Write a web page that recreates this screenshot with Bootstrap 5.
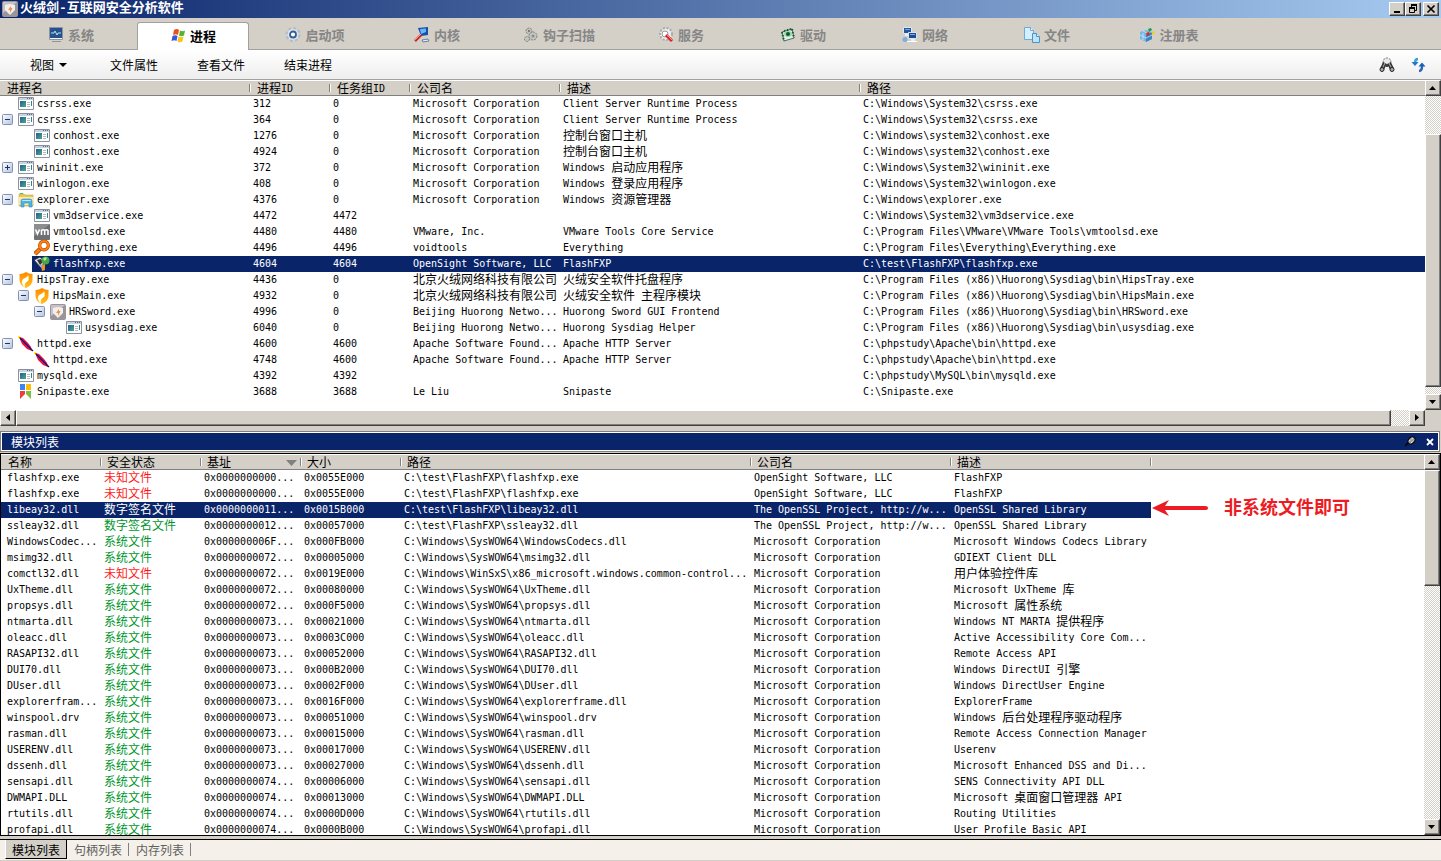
<!DOCTYPE html>
<html lang="zh-CN">
<head>
<meta charset="utf-8">
<meta name="viewport" content="width=device-width, initial-scale=1">
<title>火绒剑-互联网安全分析软件</title>
<link rel="stylesheet" href="https://cdn.jsdelivr.net/npm/bootstrap@5.3.0/dist/css/bootstrap.min.css">
<style>
:root { --face:#d4d0c8; --navy:#0a246a; --shade:#808080; --dark:#404040; }
body { background:var(--face); color:#000; font-family:"DejaVu Sans Mono","Noto Sans CJK SC",monospace; font-size:10px; line-height:16px; }
button { font-family:inherit; color:inherit; }
.han { font-family:"Noto Sans CJK SC",sans-serif; font-size:12px; line-height:12px; vertical-align:-1px; }
svg { flex:none; display:block; }

.title-bar { height:18px; padding:0 2px; gap:2px; background:linear-gradient(90deg,#0a246a,#a6caf0); color:#fff; }
.title-bar h1 { font-family:"Liberation Mono","Noto Sans CJK SC",monospace; font-size:13px; line-height:20px; font-weight:700; }
.raised { background:var(--face); border:1px solid; border-color:#fff var(--dark) var(--dark) #fff; border-radius:0; box-shadow:inset -1px -1px var(--shade); padding:0; display:flex; align-items:center; justify-content:center; flex:none; }
.win-btn { width:16px; height:14px; }
.win-btn:last-child { margin-left:2px; }

.main-tabs { height:32px; border-bottom:1px solid #a0a0a0; padding:4px 10px 0; flex-wrap:nowrap; }
.main-tabs .nav-item { width:122px; }
.main-tabs .nav-link { width:110px; height:26px; margin:0 6px; padding:0; border:0; border-radius:0; background:none; display:flex; align-items:center; justify-content:center; gap:4px; font-family:"Noto Sans CJK SC",sans-serif; font-size:13px; font-weight:700; color:#868686; }
.main-tabs .nav-link.active { width:112px; height:28px; padding-bottom:2px; margin:0 5px; background:#fff; color:#000; border:1px solid #a0a0a0; border-bottom:0; border-radius:3px 3px 0 0; }

.tool-bar { height:30px; padding:0 14px 0 22px; background:linear-gradient(#fff,#eee); border-bottom:1px solid #a0a0a0; }
.tool-bar .btn { border:0; border-radius:0; padding:0 8px; font:12px/28px "Noto Sans CJK SC",sans-serif; color:#000; }
.tool-group { gap:23px; }
.tool-group .btn:first-child { padding-right:11px; }

.list-grid { table-layout:fixed; width:100%; color:#000; --bs-table-bg:transparent; }
.list-grid th, .list-grid td { height:16px; padding:0 0 0 3px; border:0; color:inherit; white-space:nowrap; font-weight:400; vertical-align:top; line-height:16px; }
.list-grid th { background:var(--face); box-shadow:inset 0 1px #fff,inset 0 -1px var(--shade); padding:2px 0 1px 7px; line-height:13px; position:relative; }
.list-grid th + th::before { content:""; position:absolute; left:-1px; top:4px; height:8px; width:2px; border-left:1px solid var(--shade); border-right:1px solid #fff; }
.module-grid th + th { padding-left:6px; }
.list-grid td.spare { position:relative; }
.process-area { padding-bottom:10px; }
.process-grid td:first-child { padding:0; }
.module-grid td:first-child { padding-left:6px; }
.tree { display:flex; height:16px; }
.slot { width:16px; height:16px; padding:0; border:0; background:none; flex:none; }
.node { display:flex; gap:3px; padding-left:2px; flex:1; min-width:0; }
.lvl-1 { padding-left:16px; } .lvl-2 { padding-left:32px; } .lvl-3 { padding-left:48px; }
.list-grid td.risk { color:#ff1a1a; }
.list-grid td.safe { color:#00962d; }
.list-grid .picked td:not(:first-child):not(.spare), .module-grid .picked td:first-child, .picked .node { background:var(--navy); color:#fff; }

.track { background:repeating-conic-gradient(var(--face) 0 25%,#fff 0 50%) 0 0/2px 2px; }
.v-scroll { width:16px; flex:none; }
.v-scroll .raised { width:100%; }
.v-scroll button { height:16px; }
.h-scroll { height:16px; margin-right:16px; }
.h-scroll button { width:16px; height:16px; }
.f-38{flex:38} .f-254{flex:254} .f-7{flex:7} .f-1375{flex:1375} .f-18{flex:18} .f-115{flex:115} .f-235{flex:235}

.dock-title { height:21px; margin:5px 1px 1px 0; padding:1px; background:#fff; border:1px solid var(--shade); }
.dock-title > div { background:var(--navy); color:#fff; padding-left:9px; }
.dock-title h2, .pane-tabs .nav-link { font:12px/17px "Noto Sans CJK SC",sans-serif; }
.dock-title button { border:0; background:none; padding:0; width:16px; display:flex; align-items:center; justify-content:center; }
.module-pane { min-height:0; border:1px solid #000; }
.callout { position:absolute; left:0; top:-3px; height:18px; gap:16px; font:700 18px/14px "Noto Sans CJK SC",sans-serif; color:#ed1c24; }
.pane-foot { margin-top:3px; height:22px; background:#f5f1ea; border-top:1px solid #000; border-bottom:1px solid var(--face); padding-left:5px; }
.pane-tabs .nav-link { margin:0; border:0; border-radius:0; background:none; color:#606060; padding:0 7px; height:19px; line-height:19px; position:relative; }
.pane-tabs .nav-link:not(.active)::after { content:""; position:absolute; right:0; top:3px; height:13px; border-right:1px solid var(--shade); }
.pane-tabs .nav-link.active { padding:0 6px; background:var(--face); color:#000; border-right:1px solid #000; border-bottom:1px solid #000; border-left:1px solid #fff; }
</style>
</head>
<body class="vh-100 d-flex flex-column overflow-hidden">

<svg width="0" height="0" class="position-absolute" aria-hidden="true">
  <defs>
    <linearGradient id="gBlue" x2="1" y2="1"><stop stop-color="#2f56a0"/><stop offset="1" stop-color="#3fae7a"/></linearGradient>
    <linearGradient id="gBox" x2="1" y2="1"><stop stop-color="#fff"/><stop offset="1" stop-color="#b4c3de"/></linearGradient>
    <linearGradient id="gFire" y2="1" x2="0"><stop stop-color="#ff8a00"/><stop offset="1" stop-color="#ffc21a"/></linearGradient>
    <symbol id="app" viewBox="0 0 16 16"><path fill="#fff" stroke="#8c929c" d="M.5 1.500h15v12H.5z"/><path fill="#c9d3df" d="M1 2h14v2H1z"/><path fill="#52698c" d="M9 2h1v1H9zm2 0h1v1h-1zm2 0h1v1h-1z"/><path fill="url(#gBlue)" d="M2 5h6v6H2z"/><path stroke="#b5bac0" d="M9 6.500h3M9 8.500h3M9 10.500h3"/><path fill="#3a7f92" d="M13 5h1v5h-1z"/></symbol>
    <symbol id="folder" viewBox="0 0 16 16"><path fill="#e7c65c" stroke="#c9a440" stroke-width=".6" d="M1 2h5l1 1h8v11H1z"/><path fill="#fbeda6" d="M1 5h14v8H1z"/><path fill="#4bc24b" d="M2 1h3v1H2z"/><path fill="#4fb4e6" stroke="#2b8bc4" stroke-width=".6" d="M3 15V9q0-2 2-2h7q2 0 2 2v6h-3v-4H6v4z"/><path fill="#bfe6fa" d="M4 9q0-1 1-1h7q1 0 1 1z"/></symbol>
    <symbol id="vm" viewBox="0 0 16 16"><rect width="16" height="16" rx="1" fill="#6f7072"/><path fill="#8d8e90" d="M0 0h16L0 12z"/><path fill="none" stroke="#fff" stroke-width="1.600" d="M1.500 5.500 3.500 10l2-4.500M7.500 11V6.500q2-1.500 3.200 0V11m0-4.500q2-1.500 3.300 0V11"/></symbol>
    <symbol id="lens" viewBox="0 0 16 16"><path stroke="#a84300" stroke-width="4.500" d="m6 9-5 5"/><path stroke="#ff7f0f" stroke-width="3" d="m6 9-5 5"/><circle cx="10" cy="5.500" r="4.300" fill="#fff" stroke="#a84300" stroke-width="3.200"/><circle cx="10" cy="5.500" r="4.300" fill="none" stroke="#ff7f0f" stroke-width="2.200"/></symbol>
    <symbol id="fxp" viewBox="0 0 16 16"><path fill="#d9dde2" stroke="#20242c" stroke-width=".8" d="M0 4 6 1l5 4-4 7z"/><path fill="#333" d="m3 4 4-1 2 3-3 3z"/><circle cx="11.500" cy="4.500" r="4" fill="#45a845"/><path fill="#b6e8a0" d="M9 3q2-3 4-1l-2 3z"/><path fill="#f09021" d="m7 9 4-1v6l-3 1z"/><path fill="#7aa8d8" d="M6 9h2v4z"/></symbol>
    <symbol id="shield" viewBox="0 0 16 16"><path fill="url(#gFire)" d="M8 0q3 2 6.500 2v6q0 5-6.500 8-6.500-3-6.500-8V2Q5 2 8 0z"/><path fill="#fff" d="M10 3q2 5-1 7-2 2-2 5-3-1-3-5 0-3 3-4 3-1 3-3z"/><path fill="#ffb000" d="m10 9-3 6q-1-4 3-6z"/></symbol>
    <symbol id="sword" viewBox="0 0 16 16"><rect width="16" height="16" rx="2" fill="#99959b"/><path fill="#c6c2c8" d="M1 1h14L1 12z"/><path fill="#f3efed" d="m8 3 5 1v5l-5 5-5-5V4z"/><path fill="#e9924f" d="m9 5-3 4h2v3l2.500-5H9z"/></symbol>
    <symbol id="feather" viewBox="0 0 16 16"><path fill="#ff0" d="M0 0h2v2H0z"/><path fill="#f01030" d="m1 1 4 1 5 5 3 4 1 4-5-2-5-5z"/><path stroke="#c413c9" stroke-width="2" d="m3 3 9 9"/><path stroke="#14145a" stroke-width="1.200" d="m2 2 13 13"/></symbol>
    <symbol id="snip" viewBox="0 0 16 16"><path fill="#3f82f4" d="M2 0h5v6H2z"/><path fill="#fbbe08" d="M8 0h5v6H8z"/><path fill="#e84237" d="M2 7h5v3l-5 5z"/><path fill="#7bc043" d="M8 7h5v8l-5-5z"/></symbol>
    <symbol id="minus" viewBox="0 0 16 16"><rect x="2.500" y="2.500" width="10" height="10" rx="1" fill="url(#gBox)" stroke="#7b93b9"/><path stroke="#1a3666" d="M5 7.500h5"/></symbol>
    <symbol id="plus" viewBox="0 0 16 16"><use href="#minus"/><path stroke="#1a3666" d="M7.500 5v5"/></symbol>
  </defs>
</svg>

<header class="title-bar d-flex align-items-center flex-shrink-0">
  <svg width="16" height="16"><use href="#sword"/></svg>
  <h1 class="m-0 me-auto">火绒剑-互联网安全分析软件</h1>
  <div class="d-flex">
    <button class="raised win-btn" aria-label="最小化"><svg width="10" height="10"><path d="M2 7h6v2H2z"/></svg></button>
    <button class="raised win-btn" aria-label="还原"><svg width="10" height="10"><path d="M3 0h6v2H3zM1 3h6v2H1z"/><path fill="none" stroke="#000" d="M3.500 3V1M7 6.500h1.500V1M1.500 4v4.500h5V4"/></svg></button>
    <button class="raised win-btn" aria-label="关闭"><svg width="10" height="10"><path stroke="#000" stroke-width="1.700" d="m1.500 1.500 7 7m0-7-7 7"/></svg></button>
  </div>
</header>

<ul class="nav main-tabs flex-shrink-0">
  <li class="nav-item"><button class="nav-link"><svg width="16" height="16"><path fill="#f4f4f4" stroke="#8b95a2" d="M1.500.5h13v12h-13zM4 14.500h9"/><path fill="#28508e" d="M2 1h12v10H2z"/><path fill="none" stroke="#a8e7ee" d="M3 6h3l1-2 2 4 1-2h3"/></svg>系统</button></li>
  <li class="nav-item"><button class="nav-link active"><svg width="16" height="16"><path fill="#e9501c" d="M4 2q3-2 5 0L8 7Q6 5.500 3 7z"/><path fill="#55b42c" d="M10 2.500q3 1.500 5 0L14 7.500q-3 1.500-5 0z"/><path fill="#3159dc" d="M2.500 8q3-1.500 5 0l-1 5q-2-1.500-5 0z"/><path fill="#fcc314" d="M8.500 8.500q3 1.500 5 0l-1 5q-3 1.500-5 0z"/></svg>进程</button></li>
  <li class="nav-item"><button class="nav-link"><svg width="16" height="16"><circle cx="8" cy="7.500" r="6.500" fill="#d5dae0" stroke="#b4bbc4" stroke-width="2" stroke-dasharray="3 2"/><circle cx="8" cy="7.500" r="5" fill="#e2e6ea"/><circle cx="8" cy="7.500" r="3" fill="#fff" stroke="#315f9e" stroke-width="1.800"/></svg>启动项</button></li>
  <li class="nav-item"><button class="nav-link"><svg width="16" height="16"><path fill="#e8edf5" stroke="#6b7ea0" d="m8 13 6-1 1 2-6 1z"/><path fill="#164eae" d="m4 1 10-1v8l-7 1z"/><path fill="#69b6f1" d="m6 2 6-.5V5L7 7z"/><path stroke="#c82820" stroke-width="2.500" d="m7 8-6 6"/><path stroke="#f29b8e" d="m7 7-6 6"/></svg>内核</button></li>
  <li class="nav-item"><button class="nav-link"><svg width="16" height="16"><g fill="#c3c4bf" stroke="#7e827c" stroke-dasharray="2 1"><circle cx="6" cy="4" r="3"/><circle cx="10" cy="9" r="4"/><circle cx="4" cy="12" r="2.500"/></g><circle cx="10" cy="9" r="1.500" fill="#8c8f89"/><circle cx="6" cy="4" r="1" fill="#666"/></svg>钩子扫描</button></li>
  <li class="nav-item"><button class="nav-link"><svg width="16" height="16"><circle cx="8" cy="7" r="6" fill="#eee" stroke="#aaa" stroke-width="2" stroke-dasharray="2 1.500"/><circle cx="7" cy="7" r="3" fill="#fff" stroke="#999"/><path stroke="#d8202a" stroke-width="3" d="m8 8 6 6"/><path stroke="#ff8d8d" d="m8 7 6 6"/></svg>服务</button></li>
  <li class="nav-item"><button class="nav-link"><svg width="16" height="16"><path fill="#e6eeea" stroke="#42765a" d="m2 5 10-3 2 9-10 3z"/><path stroke="#18563a" stroke-width="2" stroke-dasharray="1.500 1.500" d="M2 5l2 9M12 2l2 9M4 4l7-2"/><ellipse cx="8" cy="7" rx="4" ry="3" fill="#9fd4b0"/><circle cx="8" cy="7" r="2" fill="#0b5a2c"/></svg>驱动</button></li>
  <li class="nav-item"><button class="nav-link"><svg width="16" height="16"><path fill="#23579b" stroke="#e4e8ee" d="M1.500.5h8v6h-8z"/><path fill="#eee" d="M3 7h4v2H3zm6 5h4v2H9z"/><path fill="#1b4d96" stroke="#dde2e8" d="M6.500 5.500h8v6h-8z"/><path fill="#75a8e4" d="M8 7h5v1H8zM3 2h5v1H3z"/><circle cx="3" cy="12.500" r="2.500" fill="#7daede"/><path stroke="#fff" d="M5 14.500h10"/></svg>网络</button></li>
  <li class="nav-item"><button class="nav-link"><svg width="16" height="16"><path fill="#d6efff" stroke="#6cacd7" d="M.5.5h6l3 3v9h-9z"/><path fill="#fff" stroke="#6cacd7" d="M6.500.5v3h3"/><path fill="#bfe3fb" stroke="#4c94c4" d="M8.500 6.500h4l3 3v6h-7z"/><path fill="#fff" stroke="#4c94c4" d="M12.500 6.500v3h3"/></svg>文件</button></li>
  <li class="nav-item"><button class="nav-link"><svg width="16" height="16"><path fill="#79b8e4" d="m1 5 6-2 6 2v7l-6 3-6-3z"/><path fill="#3a86c0" d="m7 8 6-3v7l-6 3z"/><path fill="none" stroke="#d6efff" stroke-width=".7" d="m1 8 6 3 6-3M4 4l6 3M4 6v7"/><path fill="#1b9e58" d="m9 2 3-1 1 2-3 2z"/><path fill="#d62c2c" d="m7 6 3-1 1 3-3 1z"/><path fill="#f2cf1a" d="m12 5 3-1 1 2-2 2z"/></svg>注册表</button></li>
</ul>

<div class="tool-bar d-flex align-items-center flex-shrink-0">
  <div class="tool-group d-flex me-auto">
    <button class="btn d-flex align-items-center gap-1" aria-haspopup="true">视图<svg width="10" height="10"><path d="M1 3h8L5 7z"/></svg></button>
    <button class="btn">文件属性</button>
    <button class="btn">查看文件</button>
    <button class="btn">结束进程</button>
  </div>
  <div class="d-flex gap-3">
    <button class="btn p-0" aria-label="查找"><svg width="16" height="16"><path fill="#e9e9e9" stroke="#777" stroke-dasharray="2 1" d="M4 6q0-5 4-5t4 5v3H4z"/><path stroke="#333" stroke-width="4" d="m6 6-3 6m7-6 3 6"/><path stroke="#bbb" d="m6 6-3 6m7-6 3 6"/><circle cx="3" cy="12.500" r="2" fill="#aaa" stroke="#222"/><circle cx="13" cy="12.500" r="2" fill="#aaa" stroke="#222"/><path fill="#444" d="M7 7h2v3H7z"/></svg></button>
    <button class="btn p-0" aria-label="刷新"><svg width="16" height="16"><path fill="none" stroke="#3ba0dd" stroke-width="2.500" d="M7 2Q4 2 4 6"/><path fill="#1f78c2" d="M.5 5h7L4 9z"/><path fill="none" stroke="#2768b8" stroke-width="2.500" d="M8 14q3 0 3-5"/><path fill="#1b5db0" d="M7.500 9.500h7L11 5.500z"/></svg></button>
  </div>
</div>

<section class="d-flex bg-white flex-shrink-0">
  <div class="process-area flex-fill overflow-hidden">
    <table class="table mb-0 list-grid process-grid">
      <colgroup><col width="250"><col width="80"><col width="80"><col width="150"><col width="300"><col></colgroup>
      <thead><tr><th>进程名</th><th>进程ID</th><th>任务组ID</th><th>公司名</th><th>描述</th><th>路径</th></tr></thead>
      <tbody id="processes"></tbody>
    </table>
  </div>
  <div class="v-scroll d-flex flex-column track">
    <button class="raised" aria-label="向上"><svg width="8" height="8"><path d="M0 6h7L3.500 2z"/></svg></button>
    <div class="f-38"></div><div class="raised f-254"></div><div class="f-7"></div>
    <button class="raised" aria-label="向下"><svg width="8" height="8"><path d="M0 2h7L3.500 6z"/></svg></button>
  </div>
</section>
<div class="h-scroll d-flex track flex-shrink-0">
  <button class="raised" aria-label="向左"><svg width="8" height="8"><path d="M6 0v7L2 3.500z"/></svg></button>
  <div class="raised f-1375"></div><div class="f-18"></div>
  <button class="raised" aria-label="向右"><svg width="8" height="8"><path d="M2 0v7l4-3.500z"/></svg></button>
</div>

<div class="dock-title flex-shrink-0">
  <div class="d-flex align-items-center h-100">
    <h2 class="m-0 me-auto">模块列表</h2>
    <button class="me-1" aria-label="固定"><svg width="11" height="11"><path stroke="#000" stroke-width="1.500" d="m0 10 4-4"/><ellipse cx="6.500" cy="4.500" rx="4" ry="3" fill="#999" stroke="#000" transform="rotate(-45 6.500 4.500)"/><path stroke="#fff" stroke-dasharray="1 1" d="m4 5 4-3M6 7l3-3"/></svg></button>
    <button aria-label="关闭面板"><svg width="8" height="8"><path stroke="#fff" stroke-width="1.800" d="m1 1 6 6m0-6L1 7"/></svg></button>
  </div>
</div>

<section class="module-pane d-flex flex-fill bg-white">
  <div class="flex-fill overflow-hidden">
    <table class="table mb-0 list-grid module-grid">
      <colgroup><col width="100"><col width="100"><col width="100"><col width="100"><col width="350"><col width="200"><col width="200"><col></colgroup>
      <thead><tr><th>名称</th><th>安全状态</th><th><span class="d-flex justify-content-between pe-1"><span>基址</span><svg width="11" height="13"><path fill="#808080" d="M0 4h11l-5.500 6z"/></svg></span></th><th>大小</th><th>路径</th><th>公司名</th><th>描述</th><th aria-label="备注"></th></tr></thead>
      <tbody id="modules"></tbody>
    </table>
  </div>
  <div class="v-scroll d-flex flex-column track">
    <button class="raised" aria-label="向上"><svg width="8" height="8"><path d="M0 6h7L3.500 2z"/></svg></button>
    <div class="raised f-115"></div><div class="f-235"></div>
    <button class="raised" aria-label="向下"><svg width="8" height="8"><path d="M0 2h7L3.500 6z"/></svg></button>
  </div>
</section>

<footer class="pane-foot flex-shrink-0">
  <div class="nav pane-tabs flex-nowrap">
    <button class="nav-link active">模块列表</button>
    <button class="nav-link">句柄列表</button>
    <button class="nav-link">内存列表</button>
  </div>
</footer>

<script>
// level, toggle (+, - or blank), icon, name, pid, group id, company, description, path
const MS = 'Microsoft Corporation', HR = '北京火绒网络科技有限公司', HREN = 'Beijing Huorong Netwo...';
const SYS = 'C:\\Windows\\System32\\', BIN = 'C:\\Program Files (x86)\\Huorong\\Sysdiag\\bin\\';
const processes = [
  [0,'','app','csrss.exe',312,0,MS,'Client Server Runtime Process',SYS+'csrss.exe'],
  [0,'-','app','csrss.exe',364,0,MS,'Client Server Runtime Process',SYS+'csrss.exe'],
  [1,'','app','conhost.exe',1276,0,MS,'控制台窗口主机','C:\\Windows\\system32\\conhost.exe'],
  [1,'','app','conhost.exe',4924,0,MS,'控制台窗口主机','C:\\Windows\\system32\\conhost.exe'],
  [0,'+','app','wininit.exe',372,0,MS,'Windows 启动应用程序',SYS+'wininit.exe'],
  [0,'','app','winlogon.exe',408,0,MS,'Windows 登录应用程序',SYS+'winlogon.exe'],
  [0,'-','folder','explorer.exe',4376,0,MS,'Windows 资源管理器','C:\\Windows\\explorer.exe'],
  [1,'','app','vm3dservice.exe',4472,4472,'','',SYS+'vm3dservice.exe'],
  [1,'','vm','vmtoolsd.exe',4480,4480,'VMware, Inc.','VMware Tools Core Service','C:\\Program Files\\VMware\\VMware Tools\\vmtoolsd.exe'],
  [1,'','lens','Everything.exe',4496,4496,'voidtools','Everything','C:\\Program Files\\Everything\\Everything.exe'],
  [1,'','fxp','flashfxp.exe',4604,4604,'OpenSight Software, LLC','FlashFXP','C:\\test\\FlashFXP\\flashfxp.exe'],
  [0,'-','shield','HipsTray.exe',4436,0,HR,'火绒安全软件托盘程序',BIN+'HipsTray.exe'],
  [1,'-','shield','HipsMain.exe',4932,0,HR,'火绒安全软件 主程序模块',BIN+'HipsMain.exe'],
  [2,'-','sword','HRSword.exe',4996,0,HREN,'Huorong Sword GUI Frontend',BIN+'HRSword.exe'],
  [3,'','app','usysdiag.exe',6040,0,HREN,'Huorong Sysdiag Helper',BIN+'usysdiag.exe'],
  [0,'-','feather','httpd.exe',4600,4600,'Apache Software Found...','Apache HTTP Server','C:\\phpstudy\\Apache\\bin\\httpd.exe'],
  [1,'','feather','httpd.exe',4748,4600,'Apache Software Found...','Apache HTTP Server','C:\\phpstudy\\Apache\\bin\\httpd.exe'],
  [0,'','app','mysqld.exe',4392,4392,'','','C:\\phpstudy\\MySQL\\bin\\mysqld.exe'],
  [0,'','snip','Snipaste.exe',3688,3688,'Le Liu','Snipaste','C:\\Snipaste.exe']
];
// name, status, base address, size, path, company, description
const WOW = 'C:\\Windows\\SysWOW64\\', FXP = 'C:\\test\\FlashFXP\\', OK = '系统文件', BAD = '未知文件', SIGNED = '数字签名文件';
const SSL = 'The OpenSSL Project, http://w...';
const modules = [
  ['flashfxp.exe',BAD,'000','0055E000',FXP+'flashfxp.exe','OpenSight Software, LLC','FlashFXP'],
  ['flashfxp.exe',BAD,'000','0055E000',FXP+'flashfxp.exe','OpenSight Software, LLC','FlashFXP'],
  ['libeay32.dll',SIGNED,'011','0015B000',FXP+'libeay32.dll',SSL,'OpenSSL Shared Library'],
  ['ssleay32.dll',SIGNED,'012','00057000',FXP+'ssleay32.dll',SSL,'OpenSSL Shared Library'],
  ['WindowsCodec...',OK,'06F','000FB000',WOW+'WindowsCodecs.dll',MS,'Microsoft Windows Codecs Library'],
  ['msimg32.dll',OK,'072','00005000',WOW+'msimg32.dll',MS,'GDIEXT Client DLL'],
  ['comctl32.dll',BAD,'072','0019E000','C:\\Windows\\WinSxS\\x86_microsoft.windows.common-control...',MS,'用户体验控件库'],
  ['UxTheme.dll',OK,'072','00080000',WOW+'UxTheme.dll',MS,'Microsoft UxTheme 库'],
  ['propsys.dll',OK,'072','000F5000',WOW+'propsys.dll',MS,'Microsoft 属性系统'],
  ['ntmarta.dll',OK,'073','00021000',WOW+'ntmarta.dll',MS,'Windows NT MARTA 提供程序'],
  ['oleacc.dll',OK,'073','0003C000',WOW+'oleacc.dll',MS,'Active Accessibility Core Com...'],
  ['RASAPI32.dll',OK,'073','00052000',WOW+'RASAPI32.dll',MS,'Remote Access API'],
  ['DUI70.dll',OK,'073','000B2000',WOW+'DUI70.dll',MS,'Windows DirectUI 引擎'],
  ['DUser.dll',OK,'073','0002F000',WOW+'DUser.dll',MS,'Windows DirectUser Engine'],
  ['explorerfram...',OK,'073','0016F000',WOW+'explorerframe.dll',MS,'ExplorerFrame'],
  ['winspool.drv',OK,'073','00051000',WOW+'winspool.drv',MS,'Windows 后台处理程序驱动程序'],
  ['rasman.dll',OK,'073','00015000',WOW+'rasman.dll',MS,'Remote Access Connection Manager'],
  ['USERENV.dll',OK,'073','00017000',WOW+'USERENV.dll',MS,'Userenv'],
  ['dssenh.dll',OK,'073','00027000',WOW+'dssenh.dll',MS,'Microsoft Enhanced DSS and Di...'],
  ['sensapi.dll',OK,'074','00006000',WOW+'sensapi.dll',MS,'SENS Connectivity API DLL'],
  ['DWMAPI.DLL',OK,'074','00013000',WOW+'DWMAPI.DLL',MS,'Microsoft 桌面窗口管理器 API'],
  ['rtutils.dll',OK,'074','0000D000',WOW+'rtutils.dll',MS,'Routing Utilities'],
  ['profapi.dll',OK,'074','0000B000',WOW+'profapi.dll',MS,'User Profile Basic API']
];

// Chinese runs are set two pixels larger than Latin so that one Han glyph is two Latin cells wide
const mix = s => String(s).replace(/[\u4e00-\u9fff]+/g, '<span class="han">$&</span>');
const icon = id => `<svg width="16" height="16" aria-hidden="true"><use href="#${id}"/></svg>`;
const cells = list => list.map(v => `<td>${mix(v)}</td>`).join('');

document.querySelectorAll('.list-grid th').forEach(th => {
  const label = th.querySelector('span span') || th;
  label.innerHTML = mix(label.textContent);
});

document.getElementById('processes').innerHTML = processes.map(([lvl, tog, ic, name, ...rest]) => {
  const slot = tog
    ? `<button class="slot" aria-label="${tog === '+' ? '展开' : '折叠'}">${icon(tog === '+' ? 'plus' : 'minus')}</button>`
    : '<span class="slot"></span>';
  return `<tr class="${ic === 'fxp' ? 'picked' : ''}"><td><div class="tree lvl-${lvl}">${slot}<div class="node">${icon(ic)}<span>${name}</span></div></div></td>${cells(rest)}</tr>`;
}).join('');

const callout = `<div class="callout d-flex align-items-start"><svg width="57" height="18"><path fill="#ed1c24" d="M1 9 18 1l-4 6h40q3 0 3 2t-3 2H14l4 6z"/></svg><span>非系统文件即可</span></div>`;
document.getElementById('modules').innerHTML = modules.map(([name, state, base, size, ...rest]) => {
  const picked = name === 'libeay32.dll';
  return `<tr class="${picked ? 'picked' : ''}"><td>${name}</td><td class="${state === BAD ? 'risk' : 'safe'}">${mix(state)}</td>${cells(['0x0000000' + base + '...', '0x' + size, ...rest])}<td class="spare">${picked ? callout : ''}</td></tr>`;
}).join('');
</script>
<script src="https://cdn.jsdelivr.net/npm/bootstrap@5.3.0/dist/js/bootstrap.bundle.min.js"></script>
</body>
</html>
